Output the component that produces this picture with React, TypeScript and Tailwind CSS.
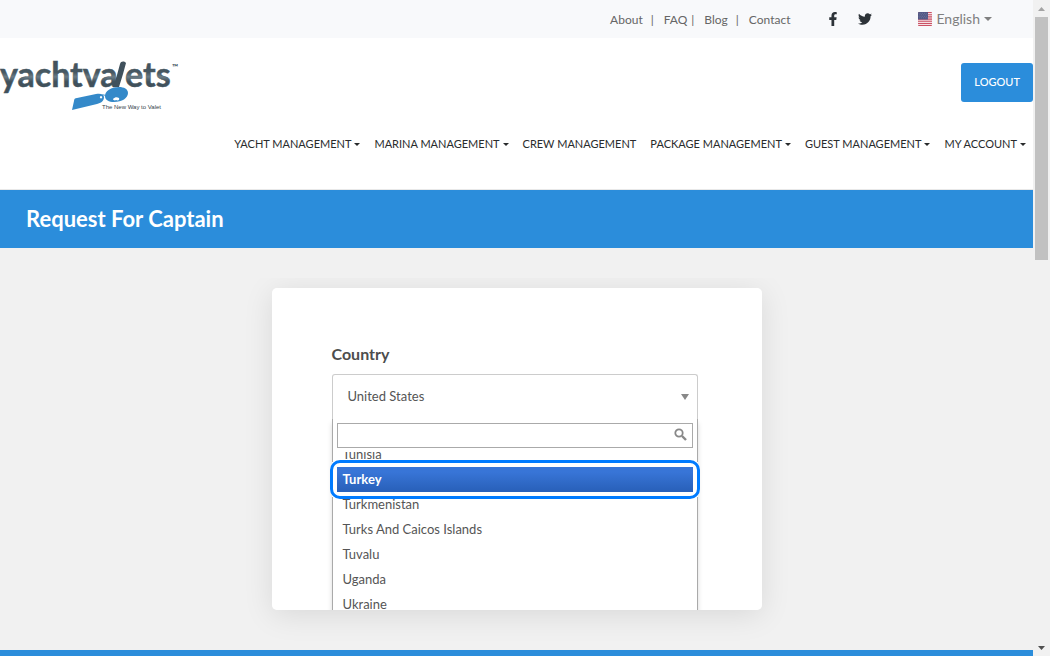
import React, { useState } from "react";
import { FaFacebookF, FaTwitter } from "react-icons/fa";

const topLinks = [
  { name: "About", gap: "mr-2" },
  { name: "FAQ", gap: "mr-1" },
  { name: "Blog", gap: "mr-2" },
  { name: "Contact", gap: "" },
];

const menuItems = [
  { name: "Yacht Management", dropdown: true },
  { name: "Marina Management", dropdown: true },
  { name: "Crew Management", dropdown: false },
  { name: "Package Management", dropdown: true },
  { name: "Guest Management", dropdown: true },
  { name: "My Account", dropdown: true },
];

const countries = [
  "Turkmenistan",
  "Turks And Caicos Islands",
  "Tuvalu",
  "Uganda",
  "Ukraine",
];

const Caret = ({ className = "" }: { className?: string }) => (
  <svg viewBox="0 0 8 4" preserveAspectRatio="none" className={className} fill="currentColor">
    <path d="M0 0h8L4 4z" />
  </svg>
);

const Flag = () => (
  <svg viewBox="0 0 14 14" className="h-3.5 w-3.5 rounded-[1px]">
    <path fill="#f3dfe3" d="M0 0h14v14H0z" />
    <path
      stroke="#cb5265"
      strokeWidth="1.1"
      d="M0 .5h14M0 2.7h14M0 4.9h14M0 7.1h14M0 9.3h14M0 11.5h14M0 13.6h14"
    />
    <path fill="#515784" d="M0 0h10v7.4H0z" />
    <path
      stroke="#9296b4"
      strokeWidth=".6"
      strokeDasharray=".7 1.1"
      d="M.7 1.3h9M1.5 2.8h8M.7 4.3h9M1.5 5.8h8"
    />
  </svg>
);

const Logo = () => (
  <svg
    viewBox="0 0 182 54"
    className="h-[54px] w-[182px] overflow-visible"
    role="img"
    aria-label="yachtvalets"
  >
    <defs>
      <linearGradient id="steel" x1="0" y1="0" x2="0" y2="1">
        <stop offset="0" stopColor="#3c4a54" />
        <stop offset=".48" stopColor="#485963" />
        <stop offset=".58" stopColor="#6b7c86" />
        <stop offset=".7" stopColor="#40515c" />
      </linearGradient>
    </defs>
    <g
      fill="url(#steel)"
      stroke="#45555f"
      strokeWidth=".5"
      fontFamily="Lato, sans-serif"
      fontWeight="700"
      fontSize="34"
    >
      <text x="0" y="29">yachtva</text>
      <text x="125" y="29">ets</text>
    </g>
    <path fill="#40515c" d="M120 6c1-3 4-3 6-1l-3 11-4 13h-6l4-12z" />
    <text x="172" y="12" fill="#40515c" fontFamily="Lato, sans-serif" fontWeight="700" fontSize="8">
      ™
    </text>
    <path
      fill="#3489c9"
      fillRule="evenodd"
      d="M77 40l19-4c4-1 8 0 8 3 0 4-3 6-7 7l-25 6 2-9c0-2 1-3 3-3zm24-2a1.2 1.2 0 1 0 .1 0z"
    />
    <path
      fill="#3489c9"
      fillRule="evenodd"
      d="M105 38c0-5 6-9 14-9 5 0 9 2 9 6 0 5-6 9-14 9-5 0-9-2-9-6zm8 3c0 1 2 2 3 1 2 1 4 0 3-2-2-1-4-1-6 1z"
    />
    <path stroke="#3489c9" strokeWidth="1" fill="none" d="M101 38c2-2 4-1 6 1" />
    <text x="102" y="51" fill="#35424b" fontFamily="Liberation Sans, sans-serif" fontSize="6">
      The New Way to Valet
    </text>
  </svg>
);

const TopBar = () => (
  <div className="flex h-[38px] items-center justify-end bg-[#f8f9fb] pr-[41px] text-[#666]">
    <ul className="flex items-center pt-0.5 text-[12px]">
      {topLinks.map((link, index) => (
        <li key={link.name} className="flex items-center">
          <a href="#" className={link.gap}>
            {link.name}
          </a>
          {index < topLinks.length - 1 && <span className="mr-2.5">|</span>}
        </li>
      ))}
    </ul>
    <a href="#" aria-label="Facebook" className="ml-9 text-[#2d3338]">
      <FaFacebookF className="h-3.5 w-3.5" />
    </a>
    <a href="#" aria-label="Twitter" className="ml-[18px] text-[#2d3338]">
      <FaTwitter className="h-3.5 w-3.5" />
    </a>
    <button className="ml-[46px] flex items-center gap-1 text-sm leading-5 text-[#808080]">
      <Flag />
      English
      <Caret className="h-1 w-2" />
    </button>
  </div>
);

const Header = () => (
  <header className="border-b border-[#e8e8e8] bg-white pb-9">
    <div className="flex items-start justify-between pt-5">
      <a href="#">
        <Logo />
      </a>
      <button className="mt-[5px] h-[39px] rounded-[3px] bg-[#2b8ddb] px-[13px] text-[11px] font-medium text-white">
        LOGOUT
      </button>
    </div>
    <nav className="mt-[23px] flex justify-end pr-[7px]">
      <ul className="flex gap-3.5">
        {menuItems.map((item) => (
          <li key={item.name}>
            <a
              href="#"
              className="flex items-center gap-[3px] text-[11px] leading-[18px] whitespace-nowrap text-[#292b2c] uppercase"
            >
              {item.name}
              {item.dropdown && <Caret className="h-[3px] w-1.5" />}
            </a>
          </li>
        ))}
      </ul>
    </nav>
  </header>
);

const CountrySelect = () => {
  const [search, setSearch] = useState("");

  return (
    <div>
      <label htmlFor="country" className="block text-base leading-5 font-bold text-[#4d4d4d]">
        Country
      </label>
      <div className="relative mt-2.5">
        <select
          id="country"
          className="block h-[45px] w-full appearance-none rounded-t-[3px] border border-b-0 border-[#ccc] bg-white px-[15px] text-[13px] text-[#555] outline-none"
        >
          <option>United States</option>
        </select>
        <Caret className="pointer-events-none absolute top-5 right-[9px] h-[6px] w-[8px] text-[#888]" />
      </div>
      <div className="border-x border-[#aaa] bg-white px-1 pt-1 text-[13px] text-[#555] shadow-[0_4px_5px_rgba(0,0,0,0.15)]">
        <div className="relative">
          <input
            type="text"
            aria-label="Search country"
            value={search}
            onChange={(e) => setSearch(e.target.value)}
            className="block h-[25px] w-full border border-[#aaa] px-1 outline-none"
          />
          <svg
            viewBox="0 0 13 13"
            className="pointer-events-none absolute top-[5px] right-[6px] h-[13px] w-[13px]"
            fill="none"
            stroke="#888"
          >
            <circle cx="5" cy="5" r="3.7" strokeWidth="1.8" />
            <path d="M8 8l4 4" strokeWidth="2.4" />
          </svg>
        </div>
        <ul role="listbox" aria-label="Countries" className="mt-1 leading-[25px]">
          {/* list is scrolled, so the first row is only partly in view */}
          <li role="option" aria-selected="false" className="flex h-[15px] items-end overflow-hidden px-1.5">
            Tunisia
          </li>
          <li
            role="option"
            aria-selected="true"
            className="relative bg-linear-to-b from-[#3875d7] from-20% to-[#2a62bc] to-90% px-1.5 font-bold text-white shadow-[0_0_0_5px_white]"
          >
            Turkey
            <span className="absolute -inset-[7px] rounded-[10px] border-3 border-[#007bff]" />
          </li>
          {countries.map((country) => (
            <li key={country} role="option" aria-selected="false" className="px-1.5">
              {country}
            </li>
          ))}
        </ul>
      </div>
    </div>
  );
};

const ScrollBar = () => (
  <div aria-hidden="true" className="flex w-[17px] shrink-0 flex-col items-center bg-[#f1f1f1]">
    <div className="flex h-[17px] items-center">
      <Caret className="h-1 w-[7px] rotate-180 text-[#a3a3a3]" />
    </div>
    <div className="h-[37%] w-[13px] bg-[#c1c1c1]" />
    <div className="mt-auto flex h-[17px] items-center">
      <Caret className="h-1 w-[7px] text-[#505050]" />
    </div>
  </div>
);

const App = () => {
  return (
    <div className="flex h-screen overflow-hidden font-['Lato',sans-serif]">
      <div className="flex min-w-0 flex-1 flex-col">
        <TopBar />
        <Header />
        <div className="bg-[#2b8ddb] px-[26px] py-3">
          <h1 className="text-[22px] leading-[34px] font-bold text-white">
            Request For Captain
          </h1>
        </div>
        <main className="bg-[#f1f1f1] pt-[30px]">
          <div className="overflow-hidden px-4 pt-2.5 pb-10">
            <div className="mx-auto h-[322px] max-w-[490px] rounded-[5px] shadow-[0_5px_30px_rgba(0,0,0,0.1)]">
              <div className="h-full overflow-hidden rounded-[5px] bg-white pt-14 pr-16 pl-15">
                <CountrySelect />
              </div>
            </div>
          </div>
        </main>
        <footer className="flex-1 bg-[#2b8ddb]" />
      </div>
      <ScrollBar />
    </div>
  );
};

export default App;
